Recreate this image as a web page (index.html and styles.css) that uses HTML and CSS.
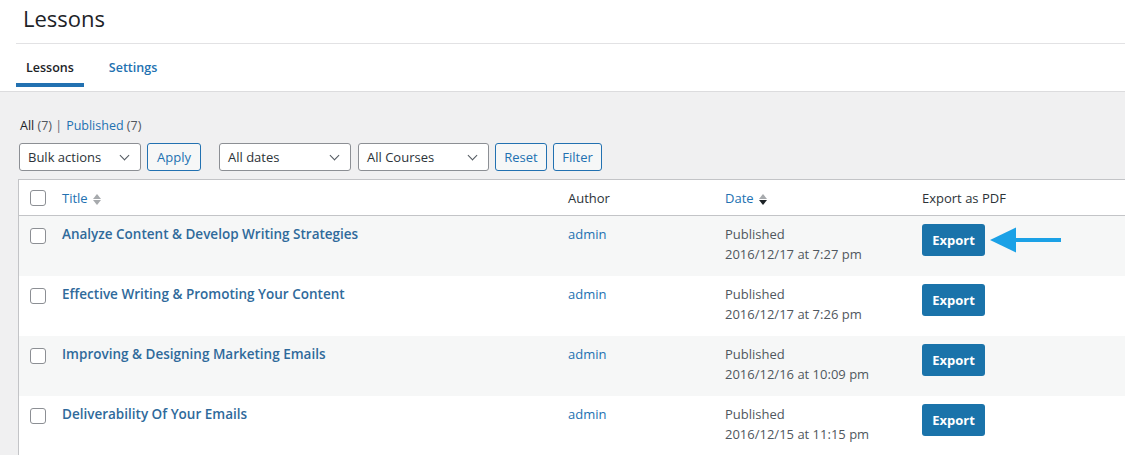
FILE: index.html
```html
<!DOCTYPE html>
<html lang="en">
<head>
    <meta charset="UTF-8">
    <meta name="viewport" content="width=device-width, initial-scale=1.0">
    <title>Lessons</title>
    <link rel="stylesheet" href="styles.css">
</head>
<body>
    <div class="top">
        <h1 class="page-title">Lessons</h1>
        <nav class="tabs">
            <a class="tab active" href="#">Lessons</a>
            <a class="tab" href="#">Settings</a>
        </nav>
    </div>

    <div class="wrap">
        <ul class="subsubsub">
            <li><a class="current" href="#">All <span class="count">(7)</span></a> |</li>
            <li><a href="#">Published <span class="count">(7)</span></a></li>
        </ul>

        <div class="tablenav">
            <div class="select w-bulk">Bulk actions <span class="chev"></span></div>
            <button class="btn w-apply">Apply</button>
            <div class="select w-dates gap-left">All dates <span class="chev"></span></div>
            <div class="select w-courses">All Courses <span class="chev"></span></div>
            <button class="btn w-reset">Reset</button>
            <button class="btn w-filter">Filter</button>
        </div>

        <table class="list">
            <thead>
                <tr>
                    <th class="cb"><span class="checkbox"></span></th>
                    <th class="col-title"><a href="#">Title</a> <span class="sort"><i class="up"></i><i class="down"></i></span></th>
                    <th class="col-author">Author</th>
                    <th class="col-date"><a href="#">Date</a> <span class="sort sorted"><i class="up"></i><i class="down"></i></span></th>
                    <th class="col-export">Export as PDF</th>
                </tr>
            </thead>
            <tbody>
                <tr>
                    <td class="cb"><span class="checkbox"></span></td>
                    <td class="col-title"><a class="row-title" href="#">Analyze Content &amp; Develop Writing Strategies</a></td>
                    <td class="col-author"><a href="#">admin</a></td>
                    <td class="col-date">Published<br>2016/12/17 at 7:27 pm</td>
                    <td class="col-export">
                        <button class="export">Export</button>
                        <svg class="arrow" width="74" height="28" viewBox="0 0 74 28">
                            <path d="M1 14 L27 1.5 L27 26.5 Z" fill="#1ba1e6"/>
                            <rect x="26" y="12" width="46" height="4" fill="#1ba1e6"/>
                        </svg>
                    </td>
                </tr>
                <tr>
                    <td class="cb"><span class="checkbox"></span></td>
                    <td class="col-title"><a class="row-title" href="#">Effective Writing &amp; Promoting Your Content</a></td>
                    <td class="col-author"><a href="#">admin</a></td>
                    <td class="col-date">Published<br>2016/12/17 at 7:26 pm</td>
                    <td class="col-export"><button class="export">Export</button></td>
                </tr>
                <tr>
                    <td class="cb"><span class="checkbox"></span></td>
                    <td class="col-title"><a class="row-title" href="#">Improving &amp; Designing Marketing Emails</a></td>
                    <td class="col-author"><a href="#">admin</a></td>
                    <td class="col-date">Published<br>2016/12/16 at 10:09 pm</td>
                    <td class="col-export"><button class="export">Export</button></td>
                </tr>
                <tr>
                    <td class="cb"><span class="checkbox"></span></td>
                    <td class="col-title"><a class="row-title" href="#">Deliverability Of Your Emails</a></td>
                    <td class="col-author"><a href="#">admin</a></td>
                    <td class="col-date">Published<br>2016/12/15 at 11:15 pm</td>
                    <td class="col-export"><button class="export">Export</button></td>
                </tr>
            </tbody>
        </table>
    </div>
</body>
</html>
```

FILE: styles.css
```css
body {
    margin: 0;
    font-family: "Open Sans", Arial, sans-serif;
    font-size: 13px;
    color: #3c434a;
    background: #f0f0f1;
    overflow: hidden;
}

a {
    color: #2271b1;
    text-decoration: none;
}

.top {
    background: #fff;
    padding-left: 16px;
    border-bottom: 1px solid #dcdcde;
}

.page-title {
    margin: 0;
    height: 43px;
    padding-left: 7px;
    font-size: 22px;
    font-weight: 400;
    line-height: 37px;
    color: #1d2327;
    border-bottom: 1px solid #e2e2e4;
}

.tabs {
    display: flex;
    height: 47px;
}

.tab {
    display: block;
    padding: 15px 10px 0;
    margin-right: 15px;
    font-weight: 600;
    font-size: 12.5px;
    color: #2271b1;
    border-bottom: 4px solid transparent;
    box-sizing: border-box;
    height: 43px;
}

.tab.active {
    color: #1d2327;
    border-bottom-color: #2271b1;
}

.wrap {
    padding: 25px 0 0 18px;
}

.subsubsub {
    list-style: none;
    margin: 0 0 9px 2px;
    padding: 0;
    display: flex;
    gap: 4px;
    color: #646970;
    font-size: 12.5px;
}

.subsubsub a.current {
    color: #1d2327;
}

.count {
    color: #50575e;
}

.tablenav {
    display: flex;
    align-items: center;
    gap: 6px;
    margin-bottom: 8px;
    margin-left: 1px;
}

.select {
    box-sizing: border-box;
    height: 28px;
    padding: 0 8px;
    display: flex;
    align-items: center;
    justify-content: space-between;
    background: #fff;
    border: 1px solid #8c8f94;
    border-radius: 3px;
    font-size: 13px;
    color: #2c3338;
}

.chev {
    width: 6px;
    height: 6px;
    border-right: 1.5px solid #50575e;
    border-bottom: 1.5px solid #50575e;
    transform: rotate(45deg);
    margin: -4px 4px 0 0;
}

.w-bulk { width: 122px; }
.w-dates { width: 132px; }
.w-courses { width: 131px; margin-left: 1px; }
.gap-left { margin-left: 12px; }

.btn {
    box-sizing: border-box;
    height: 28px;
    padding: 0;
    background: #f6f7f7;
    border: 1px solid #2271b1;
    border-radius: 3px;
    color: #2271b1;
    font-family: inherit;
    font-size: 13px;
}

.w-apply { width: 54px; }
.w-reset { width: 52px; }
.w-filter { width: 49px; }

.list {
    width: 1120px;
    border-collapse: collapse;
    background: #fff;
    border: 1px solid #c3c4c7;
    border-bottom: 0;
    table-layout: fixed;
}

.list th {
    height: 35px;
    padding: 0;
    text-align: left;
    font-weight: 400;
    font-size: 13px;
    color: #2c3338;
    border-bottom: 1px solid #c3c4c7;
}

.list td {
    height: 60px;
    padding: 9px 0 0;
    box-sizing: border-box;
    vertical-align: top;
}

.list tbody tr:nth-child(odd) {
    background: #f6f7f7;
}

.cb {
    width: 32px;
    padding-left: 11px !important;
}

.list td.cb {
    padding-top: 12px;
}

.checkbox {
    display: block;
    width: 14px;
    height: 14px;
    border: 1px solid #8c8f94;
    border-radius: 3px;
    background: #fff;
}

.col-title { width: 506px; }
.col-author { width: 157px; }
.col-date { width: 197px; }

.list td.col-date {
    line-height: 20px;
    padding-top: 8px;
    color: #50575e;
}

.row-title {
    font-weight: 600;
    font-size: 13.5px;
    color: #2f6a9b;
}

.sort {
    display: inline-flex;
    flex-direction: column;
    gap: 1px;
    vertical-align: middle;
    margin-left: 2px;
}

.sort i {
    width: 0;
    height: 0;
    border-left: 4px solid transparent;
    border-right: 4px solid transparent;
}

.sort .up { border-bottom: 5px solid #a7aaad; }
.sort .down { border-top: 5px solid #a7aaad; }
.sort.sorted .down { border-top-color: #1d2327; }

.list td.col-export {
    padding-top: 8px;
}

.export {
    box-sizing: border-box;
    width: 63px;
    height: 32px;
    background: #1a73aa;
    border: 0;
    border-radius: 3px;
    color: #fff;
    font-family: inherit;
    font-weight: 700;
    font-size: 13px;
    vertical-align: middle;
}

.arrow {
    vertical-align: middle;
    margin-left: 1px;
}
```
